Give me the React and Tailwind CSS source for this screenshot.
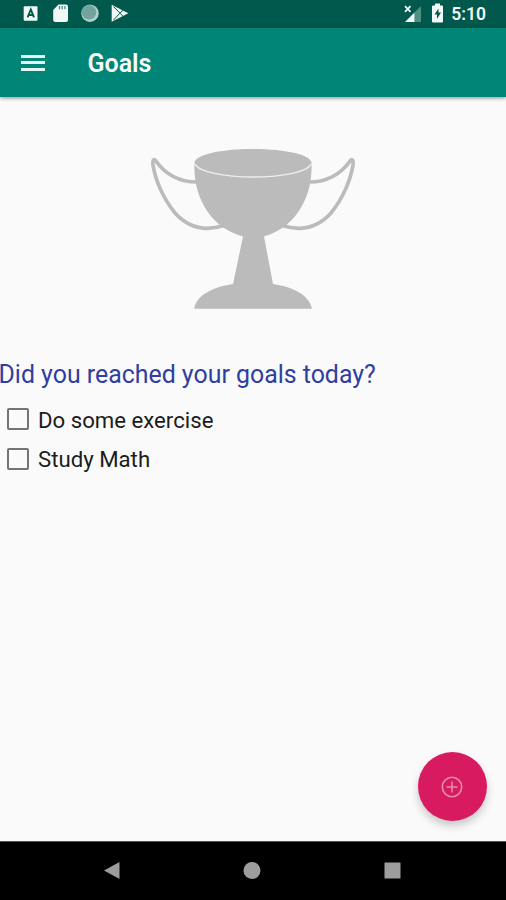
// src/App.jsx

import React from 'react';

// Status bar notification icons
const NotificationIcons = () => (
  <svg className="h-7 w-[140px]" viewBox="0 0 140 28">
    <rect x="23.700" y="6.300" width="13.800" height="14.400" rx="1" fill="#f2f8f7" />
    <path d="M27.6 17.3 30.8 9.5 34 17.3M28.6 15h4.4" fill="none" stroke="#00594c" strokeWidth="1.9" />
    <path d="M58.5 4.5h7.5a2 2 0 0 1 2 2V20a2 2 0 0 1-2 2H55.2a2 2 0 0 1-2-2V10z" fill="#f2f8f7" />
    <path d="M59.500 6v3.200M62.200 6v3.200M64.900 6v3.200" stroke="#4f8a80" strokeWidth="1.300" />
    <circle cx="90" cy="13.200" r="8.700" fill="#b5d0cb" />
    <circle cx="89" cy="12.300" r="7.200" fill="#72a49b" />
    <path d="M111.700 4.800 128.300 13.200 111.700 21.700z" fill="#f2f8f7" />
    <path d="M113.500 6.500 120 13.200 113.500 20M120 13.200l3.500-3.500M120 13.200l3.500 3.500" fill="none" stroke="#00594c" strokeWidth="1" />
  </svg>
);

// Signal and battery
const SystemIcons = () => (
  <svg className="h-7 w-[52px]" viewBox="399 0 52 28">
    <path d="M421 6V22h-6.500V12.500z" fill="#4f8f84" />
    <path d="M414.500 12.500V22h-9.500z" fill="#f2f8f7" />
    <path d="M405 6.200l5.500 5.600M410.500 6.200l-5.500 5.600" stroke="#f2f8f7" strokeWidth="1.700" />
    <path d="M435 3.600h5v1.900h2a1 1 0 0 1 1 1V21.500a1 1 0 0 1-1 1h-9a1 1 0 0 1-1-1V6.500a1 1 0 0 1 1-1h2z" fill="#f2f8f7" />
    <path d="M438.500 8.500 434.500 14.500h2.500v4.500l4-6.500h-2.500z" fill="#00594c" />
  </svg>
);

const StatusBar = () => (
  <div className="flex h-7 items-center justify-between bg-[#00594c]">
    <NotificationIcons />
    <div className="flex items-center pr-5">
      <SystemIcons />
      <span className="text-[17.500px] leading-7 font-semibold text-[#f2f8f7]">5:10</span>
    </div>
  </div>
);

const AppBar = ({ title }) => (
  <header className="relative flex h-[69px] items-center bg-[#008577] pl-[21px] shadow-[0_1px_4px_rgba(0,0,0,0.45)]">
    <button className="flex w-6 flex-col gap-[3.500px]" aria-label="Menu">
      <span className="h-[3px] w-full bg-[#e6f4f2]" />
      <span className="h-[3px] w-full bg-[#e6f4f2]" />
      <span className="h-[3px] w-full bg-[#e6f4f2]" />
    </button>
    <h1 className="pt-[3px] pl-[42.500px] text-[25px] leading-8 font-semibold text-[#f7fcfb]">{title}</h1>
  </header>
);

const Trophy = () => (
  <svg className="mx-auto mt-[51px] h-[162px] w-[206px]" viewBox="150 148 206 162">
    <g fill="none" stroke="#bbb" strokeWidth="3.700" strokeLinejoin="round">
      <path d="M197 182C179 182 165 174 155.500 160.500C153.500 158 152.500 161 153 165C155 178 162 197 175 213C189 228.500 205 231.500 224 225.500" />
      <path d="M309 182C327 182 341 174 350.500 160.500C352.500 158 353.500 161 353 165C351 178 344 197 331 213C317 228.500 301 231.500 282 225.500" />
    </g>
    <g fill="#bbb">
      <path d="M194.500 163C194.500 155 220 149 253 149S311.500 155 311.500 163C313 199 294 228 264 236.500L273 284C294 287 310 296 312 308.800H194.200C196 296 212 287 233 284L243 236.500C212 228 193 199 194.500 163z" />
    </g>
    <path d="M195 164C198 171.500 224 177 253.500 177S308.500 171.500 311 164" fill="none" stroke="#eee" strokeWidth="1.400" />
  </svg>
);

const GoalItem = ({ label }) => (
  <label className="flex h-[39.500px] items-center gap-[9px] pl-[7px]">
    <span className="h-[22px] w-[22px] rounded-[2px] border-2 border-[#747474]" />
    <span className="pt-px text-[22.200px] leading-7 text-[#1c1c1c]">{label}</span>
  </label>
);

const NavBar = () => (
  <nav className="flex h-[59px] items-center border-t border-[#555] bg-black">
    <svg className="h-[58px] w-full" viewBox="0 842 506 58" fill="#9d9d9d">
      <path d="M104 870.500 119.500 862v17z" />
      <circle cx="252" cy="870.500" r="8.500" />
      <rect x="384.500" y="862.500" width="16" height="16" rx="0.500" />
    </svg>
  </nav>
);

const goals = ['Do some exercise', 'Study Math'];

export default function App() {
  return (
    <div className="flex h-[900px] w-[506px] flex-col overflow-hidden bg-[#fafafa] font-['Roboto',sans-serif]">
      <StatusBar />
      <AppBar title="Goals" />
      <main className="relative flex-1">
        <Trophy />
        <h2 className="mt-[49px] -indent-[1.500px] text-[24.900px] leading-8 whitespace-nowrap text-[#303f9f]">Did you reached your goals today?</h2>
        <div className="mt-[8.500px]">
          {goals.map((goal) => (
            <GoalItem key={goal} label={goal} />
          ))}
        </div>
        <button
          className="absolute right-[19.500px] bottom-5 flex h-[69px] w-[69px] items-center justify-center rounded-full bg-[#d81b60] shadow-[0_5px_8px_rgba(0,0,0,0.2)]"
          aria-label="Add goal"
        >
          <svg className="h-6 w-6" viewBox="0 0 24 24" fill="none" stroke="#e88aac" strokeWidth="1.600">
            <circle cx="12" cy="12" r="9.700" />
            <path d="M12 6.500v11M6.500 12h11" />
          </svg>
        </button>
      </main>
      <NavBar />
    </div>
  );
}
